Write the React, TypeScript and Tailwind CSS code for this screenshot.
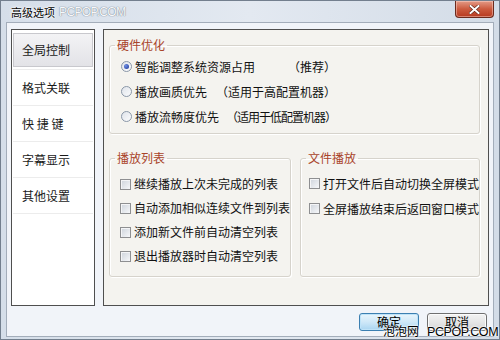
import React from "react";

const cjk = "font-['SimSun','Noto_Sans_CJK_SC',sans-serif]";

function Radio({ checked }: { checked?: boolean }) {
  return (
    <span className="w-[11px] h-[11px] rounded-full border border-[#8a97a8] bg-gradient-to-br from-[#dfe3ea] to-[#fbfcfd] flex items-center justify-center shrink-0">
      {checked && (
        <span className="w-[5px] h-[5px] rounded-full bg-[radial-gradient(circle_at_35%_35%,#6d8fe6,#1c3492)]" />
      )}
    </span>
  );
}

function Check() {
  return (
    <span className="w-[11px] h-[11px] border border-[#8e8f91] bg-gradient-to-br from-[#cdd3db] to-[#f7f8fa] shadow-[inset_1px_1px_0_#f4f5f7] shrink-0" />
  );
}

function Group({
  title,
  className,
  children,
}: {
  title: string;
  className?: string;
  children: React.ReactNode;
}) {
  return (
    <fieldset
      className={
        "border border-[#d6d3cc] rounded-[3px] shadow-[inset_1px_1px_0_#ffffff,1px_1px_0_#ffffff] " +
        (className ?? "")
      }
    >
      <legend className="ml-[5px] px-[2px] text-[12px] leading-[14px] text-[#a9442a]">
        {title}
      </legend>
      {children}
    </fieldset>
  );
}

export default function App() {
  const leftItems = ["格式关联", "快 捷 键", "字幕显示", "其他设置"];
  const playlist = [
    "继续播放上次未完成的列表",
    "自动添加相似连续文件到列表",
    "添加新文件前自动清空列表",
    "退出播放器时自动清空列表",
  ];
  const filePlay = ["打开文件后自动切换全屏模式", "全屏播放结束后返回窗口模式"];

  return (
    <div
      className={
        "relative w-[500px] h-[340px] flex flex-col border border-[#737f8e] bg-gradient-to-r from-[#d5dee9] via-[#e3e9f1] to-[#d3dce7] text-[#111] " +
        cjk
      }
    >
      {/* title bar */}
      <div className="h-[21px] flex items-start">
        <div className="flex items-center h-[21px] pl-[10px]">
          <span className="text-[11px] leading-[12px] text-black [text-shadow:0_0_4px_#fff,0_0_2px_#fff,0_0_1px_#fff]">
            高级选项
          </span>
          <span className="ml-[4px] font-['Liberation_Sans',Arial,sans-serif] text-[12px] tracking-[-0.6px] text-[#f7f8fa] [text-shadow:0_0_1px_#7a8593,0_0_1px_#7a8593]">
            PCPOP.COM
          </span>
        </div>
        <div className="ml-auto mr-[5px] w-[39px] h-[17px] rounded-b-[4px] border border-t-0 border-[#6b2a1d] bg-gradient-to-b from-[#e39a86] via-[#cc5a3e] to-[#b6391f] shadow-[inset_0_0_0_1px_rgba(255,220,210,0.45)] flex items-center justify-center">
          <svg width="11" height="9" viewBox="0 0 11 9">
            <path d="M1.5 1 L9.5 8 M9.5 1 L1.5 8" stroke="#5a1f12" strokeWidth="3.2" strokeLinecap="square" />
            <path d="M1.5 1 L9.5 8 M9.5 1 L1.5 8" stroke="#ffffff" strokeWidth="2" strokeLinecap="square" />
          </svg>
        </div>
      </div>

      {/* client */}
      <div className="flex-1 mx-[5px] mb-[2px] border border-[#a3adba] bg-[#f1f4f9] flex flex-col pl-[4px] pr-[4px] pt-[6px]">
        <div className="flex gap-[8px] h-[277px]">
          {/* left list */}
          <div className="w-[97px] h-full border border-[#4f4f4f] bg-white pt-[3px] px-[1px] text-[12px] text-[#1a1a1a]">
            <div className="h-[37px] border-b border-[#ececec]">
              <div className="h-[34px] border border-[#c8c8cd] bg-gradient-to-b from-[#f3f3f5] to-[#e3e3e7] flex items-center pl-[8px]">
                全局控制
              </div>
            </div>
            {leftItems.map((t) => (
              <div
                key={t}
                className="h-[36px] border-b border-[#ececec] flex items-center pl-[9px] whitespace-pre"
              >
                {t}
              </div>
            ))}
          </div>

          {/* right panel */}
          <div className="flex-1 h-full border border-[#4f4f4f] bg-[#f4f3ef] pt-[8px] pl-[5px] pr-[8px] text-[12px]">
            <Group title="硬件优化">
              <div className="pt-[2px] pb-[4px]">
                {[
                  { l: "智能调整系统资源占用", r: "（推荐）", c: true, t: "" },
                  { l: "播放画质优先", r: "（适用于高配置机器）", c: false, t: "" },
                  { l: "播放流畅度优先", r: "（适用于低配置机器）", c: false, t: "tracking-[-1px]" },
                ].map((row) => (
                  <div key={row.l} className="h-[25px] flex items-center pl-[11px] gap-[3px]">
                    <Radio checked={row.c} />
                    <div className="w-[201px] flex items-center justify-between">
                      <span>{row.l}</span>
                      <span className={row.t}>{row.r}</span>
                    </div>
                  </div>
                ))}
              </div>
            </Group>

            <div className="flex gap-[9px] mt-[17px]">
              <Group title="播放列表" className="w-[176px]">
                <div className="pt-[7px] pb-[8px]">
                  {playlist.map((t) => (
                    <div key={t} className="h-[24px] flex items-center pl-[10px] gap-[3px] whitespace-nowrap">
                      <Check />
                      <span>{t}</span>
                    </div>
                  ))}
                </div>
              </Group>
              <Group title="文件播放" className="flex-1">
                <div className="pt-[6px] pb-[8px]">
                  {filePlay.map((t) => (
                    <div key={t} className="h-[25px] flex items-center pl-[8px] gap-[3px] whitespace-nowrap">
                      <Check />
                      <span>{t}</span>
                    </div>
                  ))}
                </div>
              </Group>
            </div>
          </div>
        </div>

        {/* buttons */}
        <div className="flex justify-end gap-[8px] mt-[7px] pr-[2px]">
          <button className="w-[60px] h-[18px] rounded-[3px] border border-[#3c7fb1] bg-gradient-to-b from-[#e9f5fc] via-[#cfe8f8] to-[#a9d5f1] shadow-[inset_0_0_0_1px_#bfe3f8] text-[12px] leading-[16px] text-black">
            确定
          </button>
          <button className="w-[60px] h-[18px] rounded-[3px] border border-[#707070] bg-gradient-to-b from-[#f3f3f3] via-[#e6e6e6] to-[#d6d6d6] shadow-[inset_0_0_0_1px_#fbfbfb] text-[12px] leading-[16px] text-black">
            取消
          </button>
        </div>
      </div>

      {/* watermark */}
      <div className="absolute left-[382px] top-[322px] flex items-baseline gap-[8px] text-black [text-shadow:0_0_2px_#fff,0_0_2px_#fff,0_0_1px_#fff]">
        <span className="text-[12px] leading-[16px]">泡泡网</span>
        <span className="font-['Liberation_Sans',Arial,sans-serif] text-[12.5px] leading-[16px] tracking-[-0.4px]">
          PCPOP.COM
        </span>
      </div>
    </div>
  );
}
